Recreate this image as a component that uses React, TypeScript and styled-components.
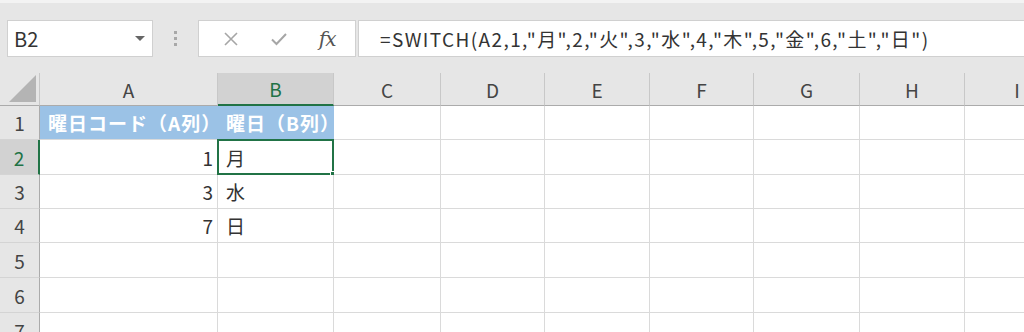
import React from "react";
import styled, { createGlobalStyle, css } from "styled-components";

const green = "#217346";
const font = `"Noto Sans CJK JP", "Noto Sans", sans-serif`;

const colWidths = [40, 178, 116, 107, 104, 105, 104, 106, 105, 105];
const rowHeights = [33, 34, 35, 34, 34, 35, 35, 35];
const columns = ["A", "B", "C", "D", "E", "F", "G", "H", "I"];

type CellData = { text?: string; align?: "left" | "right"; fill?: boolean };

const data: Record<string, CellData> = {
  A1: { text: "曜日コード（A列）", fill: true },
  B1: { text: "曜日（B列）", fill: true },
  A2: { text: "1", align: "right" },
  B2: { text: "月" },
  A3: { text: "3", align: "right" },
  B3: { text: "水" },
  A4: { text: "7", align: "right" },
  B4: { text: "日" },
};

const GlobalStyle = createGlobalStyle`
  html, body {
    margin: 0;
    padding: 0;
    background: #e6e6e6;
    overflow: hidden;
  }
  body {
    font-family: ${font};
  }
`;

const Page = styled.div`
  width: 1024px;
  height: 332px;
  overflow: hidden;
  background: #e6e6e6;
  border-top: 3px solid #f3f3f3;
  box-sizing: border-box;
`;

const Toolbar = styled.div`
  display: flex;
  align-items: center;
  height: 37px;
  margin-top: 17px;
  padding-left: 7px;
`;

const NameBox = styled.div`
  width: 146px;
  height: 37px;
  box-sizing: border-box;
  background: #fff;
  border: 1px solid #d0d0d0;
  display: flex;
  align-items: center;
  justify-content: space-between;
  padding: 0 7px 0 6px;
  font-size: 20px;
  color: #333;
`;

const DropArrow = styled.span`
  width: 0;
  height: 0;
  border-left: 5px solid transparent;
  border-right: 5px solid transparent;
  border-top: 5px solid #666;
`;

const Grip = styled.div`
  width: 45px;
  display: flex;
  flex-direction: column;
  align-items: center;
  gap: 3px;
  & > span {
    width: 3px;
    height: 3px;
    background: #a8a8a8;
  }
`;

const ButtonBox = styled.div`
  width: 158px;
  height: 37px;
  box-sizing: border-box;
  background: #fff;
  border: 1px solid #d0d0d0;
  display: flex;
  align-items: center;
  justify-content: space-around;
  padding: 0 4px 0 8px;
`;

const Fx = styled.span`
  font-family: "DejaVu Serif", "Liberation Serif", serif;
  font-style: italic;
  font-size: 20px;
  color: #555;
  letter-spacing: -1px;
`;

const FormulaBox = styled.div`
  flex: 1;
  height: 37px;
  margin-left: 2px;
  box-sizing: border-box;
  background: #fff;
  border: 1px solid #d0d0d0;
  border-right: none;
  display: flex;
  align-items: center;
  padding-left: 21px;
  font-size: 19px;
  letter-spacing: 1.4px;
  color: #333;
  white-space: nowrap;
`;

const Sheet = styled.div`
  margin-top: 16px;
  display: grid;
  grid-template-columns: ${colWidths.map((w) => `${w}px`).join(" ")};
  grid-template-rows: ${rowHeights.map((h) => `${h}px`).join(" ")};
  background: #fff;
`;

const headerBase = css`
  background: #e6e6e6;
  box-sizing: border-box;
  display: flex;
  align-items: center;
  justify-content: center;
  font-size: 19px;
  color: #444;
`;

const Corner = styled.div`
  ${headerBase};
  position: relative;
  border-right: 1px solid #c8c8c8;
  border-bottom: 1px solid #ababab;
  &::after {
    content: "";
    position: absolute;
    right: 3px;
    bottom: 3px;
    border-left: 27px solid transparent;
    border-bottom: 27px solid #b4b4b4;
  }
`;

const ColHeader = styled.div<{ $selected?: boolean }>`
  ${headerBase};
  border-right: 1px solid #c8c8c8;
  border-bottom: ${(p) => (p.$selected ? `2px solid ${green}` : "1px solid #ababab")};
  background: ${(p) => (p.$selected ? "#d2d2d2" : "#e6e6e6")};
  color: ${(p) => (p.$selected ? green : "#444")};
`;

const RowHeader = styled.div<{ $selected?: boolean }>`
  ${headerBase};
  border-bottom: 1px solid #d4d4d4;
  border-right: ${(p) => (p.$selected ? `2px solid ${green}` : "1px solid #ababab")};
  background: ${(p) => (p.$selected ? "#d2d2d2" : "#e6e6e6")};
  color: ${(p) => (p.$selected ? green : "#444")};
`;

const Cell = styled.div<{ $align?: "left" | "right"; $fill?: boolean; $active?: boolean }>`
  position: relative;
  box-sizing: border-box;
  display: flex;
  align-items: center;
  justify-content: ${(p) => (p.$align === "right" ? "flex-end" : "flex-start")};
  padding: 0 4px 0 8px;
  font-size: 19px;
  letter-spacing: ${(p) => (p.$fill ? "1px" : "0")};
  white-space: nowrap;
  color: ${(p) => (p.$fill ? "#fff" : "#333")};
  font-weight: ${(p) => (p.$fill ? 700 : 400)};
  background: ${(p) => (p.$fill ? "#9bc2e6" : "#fff")};
  border-right: 1px solid ${(p) => (p.$fill ? "#9bc2e6" : "#dadada")};
  border-bottom: 1px solid #dadada;
  ${(p) =>
    p.$active &&
    css`
      &::before {
        content: "";
        position: absolute;
        left: -1px;
        top: -1px;
        right: -1px;
        bottom: -1px;
        border: 2px solid ${green};
      }
      &::after {
        content: "";
        position: absolute;
        right: -4px;
        bottom: -4px;
        width: 6px;
        height: 6px;
        background: ${green};
        border: 1px solid #fff;
        border-right: none;
        border-bottom: none;
      }
    `}
`;

function CancelIcon() {
  return (
    <svg width="16" height="16" viewBox="0 0 16 16">
      <path d="M2 2 L14 14 M14 2 L2 14" stroke="#a6a6a6" strokeWidth="1.6" fill="none" />
    </svg>
  );
}

function CheckIcon() {
  return (
    <svg width="18" height="16" viewBox="0 0 18 16">
      <path d="M2 8.5 L6.5 13 L16 3" stroke="#a6a6a6" strokeWidth="2" fill="none" />
    </svg>
  );
}

function App() {
  const rows = [1, 2, 3, 4, 5, 6, 7];
  return (
    <Page>
      <GlobalStyle />
      <Toolbar>
        <NameBox>
          <span>B2</span>
          <DropArrow />
        </NameBox>
        <Grip>
          <span />
          <span />
          <span />
        </Grip>
        <ButtonBox>
          <CancelIcon />
          <CheckIcon />
          <Fx>fx</Fx>
        </ButtonBox>
        <FormulaBox>=SWITCH(A2,1,"月",2,"火",3,"水",4,"木",5,"金",6,"土","日")</FormulaBox>
      </Toolbar>
      <Sheet>
        <Corner />
        {columns.map((c) => (
          <ColHeader key={c} $selected={c === "B"}>
            {c}
          </ColHeader>
        ))}
        {rows.map((r) => (
          <React.Fragment key={r}>
            <RowHeader $selected={r === 2}>{r}</RowHeader>
            {columns.map((c) => {
              const cell = data[`${c}${r}`] || {};
              return (
                <Cell
                  key={c}
                  $align={cell.align}
                  $fill={cell.fill}
                  $active={c === "B" && r === 2}
                >
                  {cell.text}
                </Cell>
              );
            })}
          </React.Fragment>
        ))}
      </Sheet>
    </Page>
  );
}

export default App;
